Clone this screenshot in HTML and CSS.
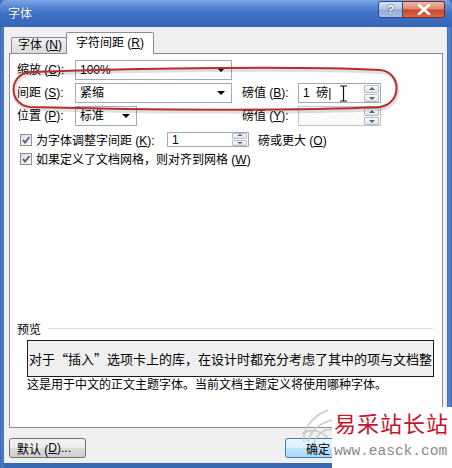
FILE: index.html
```html
<!DOCTYPE html>
<html lang="zh">
<head>
<meta charset="utf-8">
<title>字体</title>
<link rel="stylesheet" href="styles.css">
</head>
<body>
<div class="window">
  <div class="titlebar">
    <span class="title">字体</span>
    <div class="caption-btns">
      <span class="cbtn help">?</span>
      <span class="cbtn close"><svg width="14" height="11" viewBox="0 0 14 11"><path d="M2 1 L12 10 M12 1 L2 10" stroke="#fff" stroke-width="2.6" stroke-linecap="round"/></svg></span>
    </div>
  </div>
  <div class="client">
    <div class="tabs">
      <div class="tab">字体 (<u>N</u>)</div>
      <div class="tab active">字符间距 (<u>R</u>)</div>
    </div>
    <div class="panel">
      <div class="grid">
        <span class="lbl">缩放 (<u>C</u>):</span>
        <div class="combo wide"><span class="val">100%</span><span class="arrow"></span></div>
        <span></span><span></span>

        <span class="lbl">间距 (<u>S</u>):</span>
        <div class="combo wide"><span class="val">紧缩</span><span class="arrow"></span></div>
        <span class="lbl">磅值 (<u>B</u>):</span>
        <div class="spin"><span class="val">1&nbsp; 磅|</span><span class="spinbtns"><span class="sb up"></span><span class="sb down"></span></span></div>

        <span class="lbl">位置 (<u>P</u>):</span>
        <div class="combo narrow"><span class="val">标准</span><span class="arrow"></span></div>
        <span class="lbl">磅值 (<u>Y</u>):</span>
        <div class="spin disabled"><span class="val"></span><span class="spinbtns"><span class="sb up"></span><span class="sb down"></span></span></div>
      </div>

      <div class="check-row first">
        <div class="check-label">
          <span class="checkbox"><svg width="10" height="10" viewBox="0 0 10 10"><path d="M2 5 L4 7.5 L8.5 2" fill="none" stroke="#4b6183" stroke-width="1.8"/></svg></span>
          <span>为字体调整字间距 (<u>K</u>):</span>
        </div>
        <div class="spin small"><span class="val">1</span><span class="spinbtns"><span class="sb up"></span><span class="sb down"></span></span></div>
        <span class="after">磅或更大 (<u>O</u>)</span>
      </div>
      <div class="check-row">
        <div class="check-label">
          <span class="checkbox"><svg width="10" height="10" viewBox="0 0 10 10"><path d="M2 5 L4 7.5 L8.5 2" fill="none" stroke="#4b6183" stroke-width="1.8"/></svg></span>
          <span>如果定义了文档网格，则对齐到网格 (<u>W</u>)</span>
        </div>
      </div>

      <div class="preview-head"><span>预览</span><span class="rule"></span></div>
      <div class="preview-box">对于“插入”选项卡上的库，在设计时都充分考虑了其中的项与文档整</div>
      <div class="desc">这是用于中文的正文主题字体。当前文档主题定义将使用哪种字体。</div>
    </div>
    <div class="buttons">
      <span class="btn">默认 (<u>D</u>)...</span>
      <span class="btn ok">确定</span>
    </div>
  </div>

  <svg class="annotation" width="452" height="468" viewBox="0 0 452 468">
    <path d="M30 72 C150 68 300 66 380 70 C402 72 402 104 380 107 C300 111 150 110 30 107 C8 105 8 74 30 72 Z" fill="none" stroke="rgba(0,0,0,0.12)" stroke-width="4" transform="translate(1 2)"/>
    <path d="M30 72 C150 68 300 66 380 70 C402 72 402 104 380 107 C300 111 150 110 30 107 C8 105 8 74 30 72 Z" fill="none" stroke="#b3302e" stroke-width="2"/>
    <path d="M340 86 H347 M343.5 86 V101 M340 101 H347" stroke="#111" stroke-width="1.2" fill="none"/>
  </svg>

  <svg class="logo-swirl" width="40" height="42" viewBox="0 0 40 42">
    <path d="M6 38 C4 26 14 12 30 6 M10 38 C12 28 20 20 34 16 M4 30 C12 24 22 26 30 34 M16 40 C18 30 26 24 36 26" fill="none" stroke="#c9c9c9" stroke-width="1.5"/>
  </svg>
  <div class="watermark">
    <div class="wm-cn">易采站长站</div>
    <div class="wm-url">www.easck.com</div>
  </div>
</div>
</body>
</html>
```

FILE: styles.css
```css
* { box-sizing: border-box; }
html, body { margin: 0; padding: 0; }
body {
  width: 452px;
  height: 468px;
  overflow: hidden;
  font-family: "Liberation Sans", "Noto Sans CJK SC", sans-serif;
  font-size: 12px;
  color: #000;
  background: #fff;
}
u { text-decoration: underline; text-underline-offset: 1px; }

.window {
  position: relative;
  width: 452px;
  height: 468px;
  background: linear-gradient(90deg, #3a68b4 0, #5782c8 3px, #3a68b4 4px, #3a68b4 447px, #5a86cc 449px, #3a68b4 452px);
  display: flex;
  flex-direction: column;
}

.titlebar {
  height: 27px;
  flex: none;
  display: flex;
  justify-content: space-between;
  align-items: flex-start;
  background: linear-gradient(#7ba5e3 0, #5b8bd6 6px, #3f70c3 14px, #3565b7 27px);
  border-radius: 6px 6px 0 0;
}
.title {
  color: #fff;
  font-size: 12px;
  margin: 6px 0 0 8px;
  line-height: 16px;
  text-shadow: 0 0 2px rgba(0,0,40,0.4);
}
.caption-btns {
  display: flex;
  margin: 1px 7px 0 0;
}
.cbtn {
  height: 17px;
  display: flex;
  align-items: center;
  justify-content: center;
  border: 1px solid #2f4f86;
}
.help {
  width: 25px;
  border-radius: 3px 0 0 3px;
  background: linear-gradient(#d8e3f3 0, #b6c8e6 45%, #93acd8 55%, #a9c0e6 100%);
  color: #fff;
  font-weight: bold;
  font-size: 13px;
  font-family: "Liberation Sans", sans-serif;
  text-shadow: 0 0 2px #2c4b80, 0 0 1px #2c4b80;
}
.close {
  width: 42px;
  border-left: none;
  border-color: #7b2a1a;
  border-radius: 0 3px 3px 0;
  background: linear-gradient(#efb7a6 0, #df8a70 45%, #c8482c 55%, #d9694a 100%);
}

.client {
  flex: none;
  height: 436px;
  margin: 0 5px 5px 4px;
  background: #f0f0f0;
  padding: 6px 4px 0 5px;
}

.tabs {
  display: flex;
  align-items: flex-end;
  height: 20px;
  padding-left: 2px;
  position: relative;
  z-index: 2;
}
.tab {
  height: 16px;
  width: 56px;
  border: 1px solid #898c95;
  border-bottom: none;
  background: linear-gradient(#f2f2f2, #dcdcdc);
  font-size: 12px;
  line-height: 14px;
  padding-left: 6px;
  border-radius: 2px 2px 0 0;
}
.tab.active {
  height: 22px;
  width: 88px;
  margin-bottom: -1px;
  margin-left: -1px;
  background: #fff;
  padding-left: 9px;
  line-height: 20px;
}

.panel {
  width: 434px;
  height: 375px;
  background: #fff;
  border: 1px solid #898c95;
  padding: 6px 9px 0 7px;
  position: relative;
  z-index: 1;
}

.grid {
  display: grid;
  grid-template-columns: 58px 167px 56px 83px;
  grid-template-rows: 20px 20px 20px;
  row-gap: 3px;
  align-items: center;
}
.lbl { line-height: 14px; white-space: nowrap; }

.combo, .spin {
  height: 20px;
  border: 1px solid #a3a9b3;
  background: #fff;
  display: flex;
  align-items: center;
  justify-content: space-between;
  position: relative;
}
.combo.wide { width: 157px; }
.combo.narrow { width: 62px; }
.combo .val, .spin .val { padding-left: 4px; font-size: 12px; line-height: 14px; white-space: nowrap; }
.arrow {
  width: 0; height: 0;
  border-left: 4px solid transparent;
  border-right: 4px solid transparent;
  border-top: 4px solid #000;
  margin-right: 6px;
}

.spin { width: 83px; padding-right: 1px; }
.spin.disabled { background: #fafafa; border-color: #c0c4ca; }
.spinbtns {
  display: flex;
  flex-direction: column;
  gap: 1px;
  width: 15px;
}
.sb {
  height: 8px;
  border: 1px solid #b5bdc8;
  background: linear-gradient(#fbfbfb, #e0e3e7);
  border-radius: 1px;
  position: relative;
}
.sb::after {
  content: "";
  position: absolute;
  left: 4px;
  top: 1px;
  border-left: 3px solid transparent;
  border-right: 3px solid transparent;
}
.sb.up::after { border-bottom: 3px solid #5a6372; top: 1px; }
.sb.down::after { border-top: 3px solid #5a6372; top: 2px; }

.check-row {
  display: flex;
  align-items: center;
  height: 15px;
  margin-top: 4px;
}
.check-row.first { margin-top: 6px; }
.check-label {
  display: flex;
  align-items: center;
  width: 150px;
  white-space: nowrap;
}
.checkbox {
  width: 12px;
  height: 12px;
  margin: 0 4px 0 3px;
  border: 1px solid #8e8f8f;
  background: linear-gradient(135deg, #dcdcdc, #fbfbfb);
  display: flex;
  align-items: center;
  justify-content: center;
}
.spin.small { width: 82px; height: 15px; }
.spin.small .sb { height: 6px; }
.spin.small .sb.up::after { top: 0; border-bottom-width: 2px; }
.spin.small .sb.down::after { top: 1px; border-top-width: 2px; }
.after { margin-left: 9px; white-space: nowrap; }

.preview-head {
  display: flex;
  align-items: center;
  margin-top: 155px;
  height: 14px;
}
.rule {
  flex: 1;
  height: 1px;
  background: #d5dfe5;
  margin-left: 7px;
}
.preview-box {
  margin: 5px 0 0 10px;
  width: 407px;
  height: 37px;
  border: 1px solid #1d1d1d;
  background: #f0f0f0;
  font-family: "Noto Sans CJK SC", sans-serif;
  font-size: 13px;
  line-height: 35px;
  white-space: nowrap;
  overflow: hidden;
  padding-left: 1px;
}
.desc {
  margin: 1px 0 0 10px;
  line-height: 14px;
  white-space: nowrap;
}

.buttons {
  display: flex;
  margin-top: 10px;
}
.btn {
  height: 20px;
  display: flex;
  align-items: center;
  border: 1px solid #707070;
  border-radius: 3px;
  background: linear-gradient(#f3f3f3 0, #ebebeb 50%, #dddddd 50%, #cfcfcf 100%);
  font-size: 12px;
  white-space: nowrap;
}
.btn:first-child { width: 77px; padding-left: 7px; }
.btn.ok {
  margin-left: 199px;
  width: 76px;
  padding-left: 20px;
  border-color: #3c7fb1;
  background: linear-gradient(#eaf6fd 0, #d9f0fc 50%, #bee6fd 50%, #a7d9f5 100%);
}

.annotation {
  position: absolute;
  left: 0;
  top: 0;
  pointer-events: none;
  z-index: 5;
}
.logo-swirl {
  position: absolute;
  left: 298px;
  top: 404px;
  z-index: 6;
}
.watermark {
  position: absolute;
  left: 332px;
  top: 407px;
  width: 120px;
  height: 61px;
  background: #fff;
  z-index: 6;
  padding: 1px 0 0 2px;
}
.wm-cn {
  font-family: "Noto Sans CJK SC", serif;
  font-size: 22px;
  line-height: 28px;
  color: #c5142c;
  letter-spacing: 1px;
  white-space: nowrap;
}
.wm-url {
  margin-top: 7px;
  font-family: "Liberation Mono", monospace;
  font-size: 14.5px;
  line-height: 16px;
  color: #8a8a8a;
  white-space: nowrap;
}
```
